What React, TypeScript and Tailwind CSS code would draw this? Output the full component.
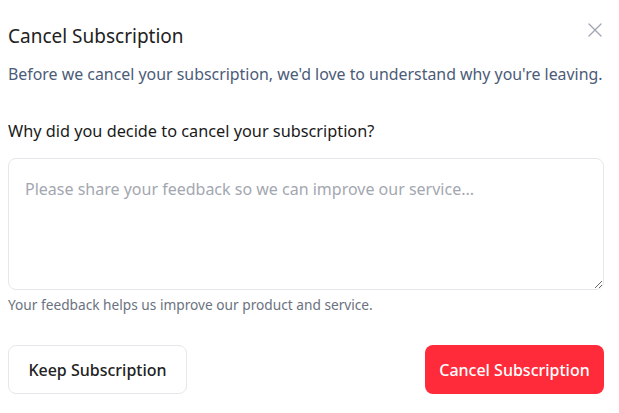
import { X } from 'lucide-react';

export default function App() {
  return (
    <div className="relative w-[619px] h-[413px] bg-white pl-2 pr-[15px] text-[#1f2937]" style={{ fontFamily: '"Noto Sans", sans-serif' }}>
      <button
        type="button"
        aria-label="Close"
        className="absolute top-[18px] left-[583px] inline-flex h-6 w-6 items-center justify-center text-[#9ca3af]"
      >
        <X size={24} strokeWidth={1.2} />
      </button>

      <header className="pt-[24px]">
        <h2 className="text-[19px] leading-[24px] font-normal text-[#222]">Cancel Subscription</h2>
        <p className="mt-[15px] whitespace-nowrap text-[15.9px] leading-[22px] text-[#4b5b78]">
          Before we cancel your subscription, we'd love to understand why you're leaving.
        </p>
      </header>

      <section className="mt-[35px]">
        <label className="block text-[16.3px] leading-[22px] font-normal text-[#1a1a1a]">
          Why did you decide to cancel your subscription?
        </label>
        <textarea
          className="mt-[16px] block h-[132px] w-full rounded-lg border border-gray-200 px-4 py-[18px] text-[16px] text-[#222] placeholder:text-[#a3a7b0] outline-none"
          placeholder="Please share your feedback so we can improve our service..."
        />
        <p className="mt-[6px] text-[13.7px] leading-[18px] text-[#6b7280]">
          Your feedback helps us improve our product and service.
        </p>
      </section>

      <footer className="mt-[31px] flex justify-between">
        <button
          type="button"
          className="inline-flex h-[49px] w-[179px] items-center justify-center rounded-lg border border-gray-200 bg-white text-[16px] font-medium text-[#222]"
        >
          Keep Subscription
        </button>
        <button
          type="button"
          className="inline-flex h-[49px] w-[179px] items-center justify-center rounded-lg bg-[#ff2b3a] text-[16px] font-medium text-white"
        >
          Cancel Subscription
        </button>
      </footer>
    </div>
  );
}
